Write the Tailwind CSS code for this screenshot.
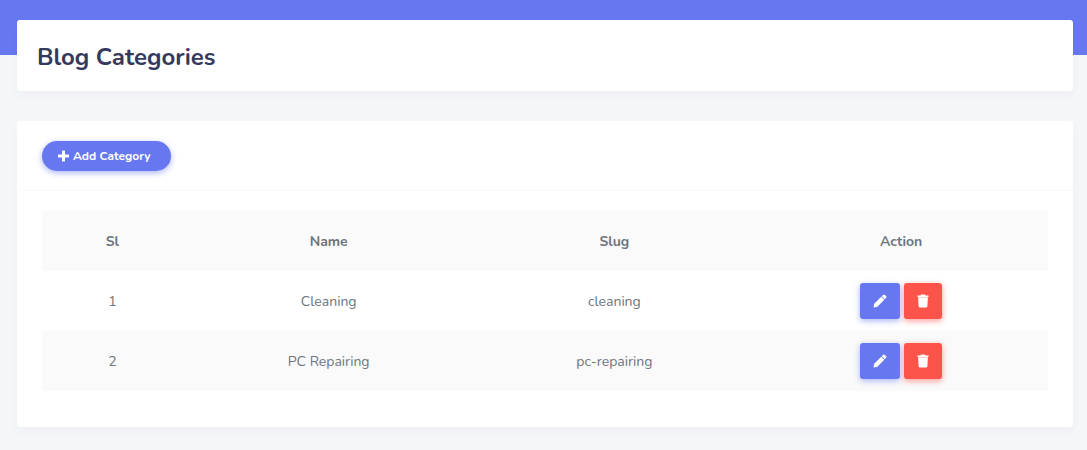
<!DOCTYPE html>
<html lang="en">
<head>
<meta charset="utf-8">
<meta name="viewport" content="width=device-width, initial-scale=1">
<title>Blog Categories</title>
<script src="https://cdn.jsdelivr.net/npm/@tailwindcss/browser@4"></script>
</head>
<body class="min-h-screen bg-[#f4f6f9] bg-[linear-gradient(#6777ef_55px,#f4f6f9_55px)] pt-5 pb-6 pl-[17px] pr-3.5 font-['Nunito','Open_Sans',sans-serif] text-sm text-[#6c757d]">
<svg class="hidden" aria-hidden="true">
  <symbol id="plus" viewBox="0 0 11 12"><path d="M4.600.5H6.400Q7 .5 7 1.100V4.500H10.400Q11 4.500 11 5.100V6.900Q11 7.500 10.400 7.500H7V10.900Q7 11.500 6.400 11.500H4.600Q4 11.500 4 10.900V7.500H.6Q0 7.500 0 6.900V5.100Q0 4.500.6 4.500H4V1.100Q4 .5 4.600.5Z"/></symbol>
  <symbol id="pencil" viewBox="0 0 14 14"><path d="M.6 13.400 1 9.900 8.200 2.700 11.300 5.800 4.100 13Q2.300 13.400.6 13.400ZM8.700 2.200 10.300.8Q11.100.2 11.900.9L13.100 2.100Q13.800 2.900 13.200 3.700L11.800 5.300Z"/></symbol>
  <symbol id="trash" viewBox="0 0 12 14"><path d="M.5 1.500H3.400L4.100.6H7.900L8.600 1.500H11.500V3H.5ZM1.100 3.300H10.900L10.400 12.300Q10.300 13.500 9 13.500H3Q1.700 13.500 1.600 12.300Z"/></symbol>
</svg>
<main>
  <header class="mb-[30px] flex h-[71px] items-center rounded-[3px] bg-white px-5 pt-0.5 shadow-[0_4px_8px_rgba(0,0,0,0.03)]">
    <h1 class="text-2xl font-bold text-[#34395e]">Blog Categories</h1>
  </header>
  <section class="rounded-[3px] bg-white shadow-[0_4px_8px_rgba(0,0,0,0.03)]">
    <div class="flex h-[70px] items-center border-b border-[#f9f9f9] px-[25px]">
      <a href="#" class="flex h-[30px] items-center gap-1 rounded-full bg-[#6777ef] pr-5 pl-4 text-xs font-bold text-white shadow-[0_2px_6px_#acb5f6]"><svg class="h-3 w-[11px] fill-current" aria-hidden="true"><use href="#plus"/></svg>Add Category</a>
    </div>
    <div class="px-[25px] pt-5 pb-9">
      <table class="w-full table-fixed text-center">
        <thead>
          <tr class="h-[60px] bg-black/2">
            <th class="w-[14%] pt-0.5 font-bold">Sl</th>
            <th class="w-[29%] pt-0.5 font-bold">Name</th>
            <th class="w-[27.8%] pt-0.5 font-bold">Slug</th>
            <th class="pt-0.5 font-bold">Action</th>
          </tr>
        </thead>
        <tbody>
          <tr class="h-[60px]">
            <td class="pt-0.5">1</td>
            <td class="pt-0.5">Cleaning</td>
            <td class="pt-0.5">cleaning</td>
            <td>
              <div class="flex justify-center gap-1">
                <a href="#" aria-label="Edit Cleaning" class="flex h-9 w-10 items-center justify-center rounded-[3px] bg-[#6777ef] text-white shadow-[0_2px_6px_#acb5f6]"><svg class="size-3.5 fill-current" aria-hidden="true"><use href="#pencil"/></svg></a>
                <button type="button" aria-label="Delete Cleaning" class="flex h-9 w-[38px] items-center justify-center rounded-[3px] bg-[#fc544b] text-white shadow-[0_2px_6px_#fd9b96]"><svg class="h-3.5 w-3 fill-current" aria-hidden="true"><use href="#trash"/></svg></button>
              </div>
            </td>
          </tr>
          <tr class="h-[60px] bg-black/2">
            <td class="pt-0.5">2</td>
            <td class="pt-0.5">PC Repairing</td>
            <td class="pt-0.5">pc-repairing</td>
            <td>
              <div class="flex justify-center gap-1">
                <a href="#" aria-label="Edit PC Repairing" class="flex h-9 w-10 items-center justify-center rounded-[3px] bg-[#6777ef] text-white shadow-[0_2px_6px_#acb5f6]"><svg class="size-3.5 fill-current" aria-hidden="true"><use href="#pencil"/></svg></a>
                <button type="button" aria-label="Delete PC Repairing" class="flex h-9 w-[38px] items-center justify-center rounded-[3px] bg-[#fc544b] text-white shadow-[0_2px_6px_#fd9b96]"><svg class="h-3.5 w-3 fill-current" aria-hidden="true"><use href="#trash"/></svg></button>
              </div>
            </td>
          </tr>
        </tbody>
      </table>
    </div>
  </section>
</main>
</body>
</html>
